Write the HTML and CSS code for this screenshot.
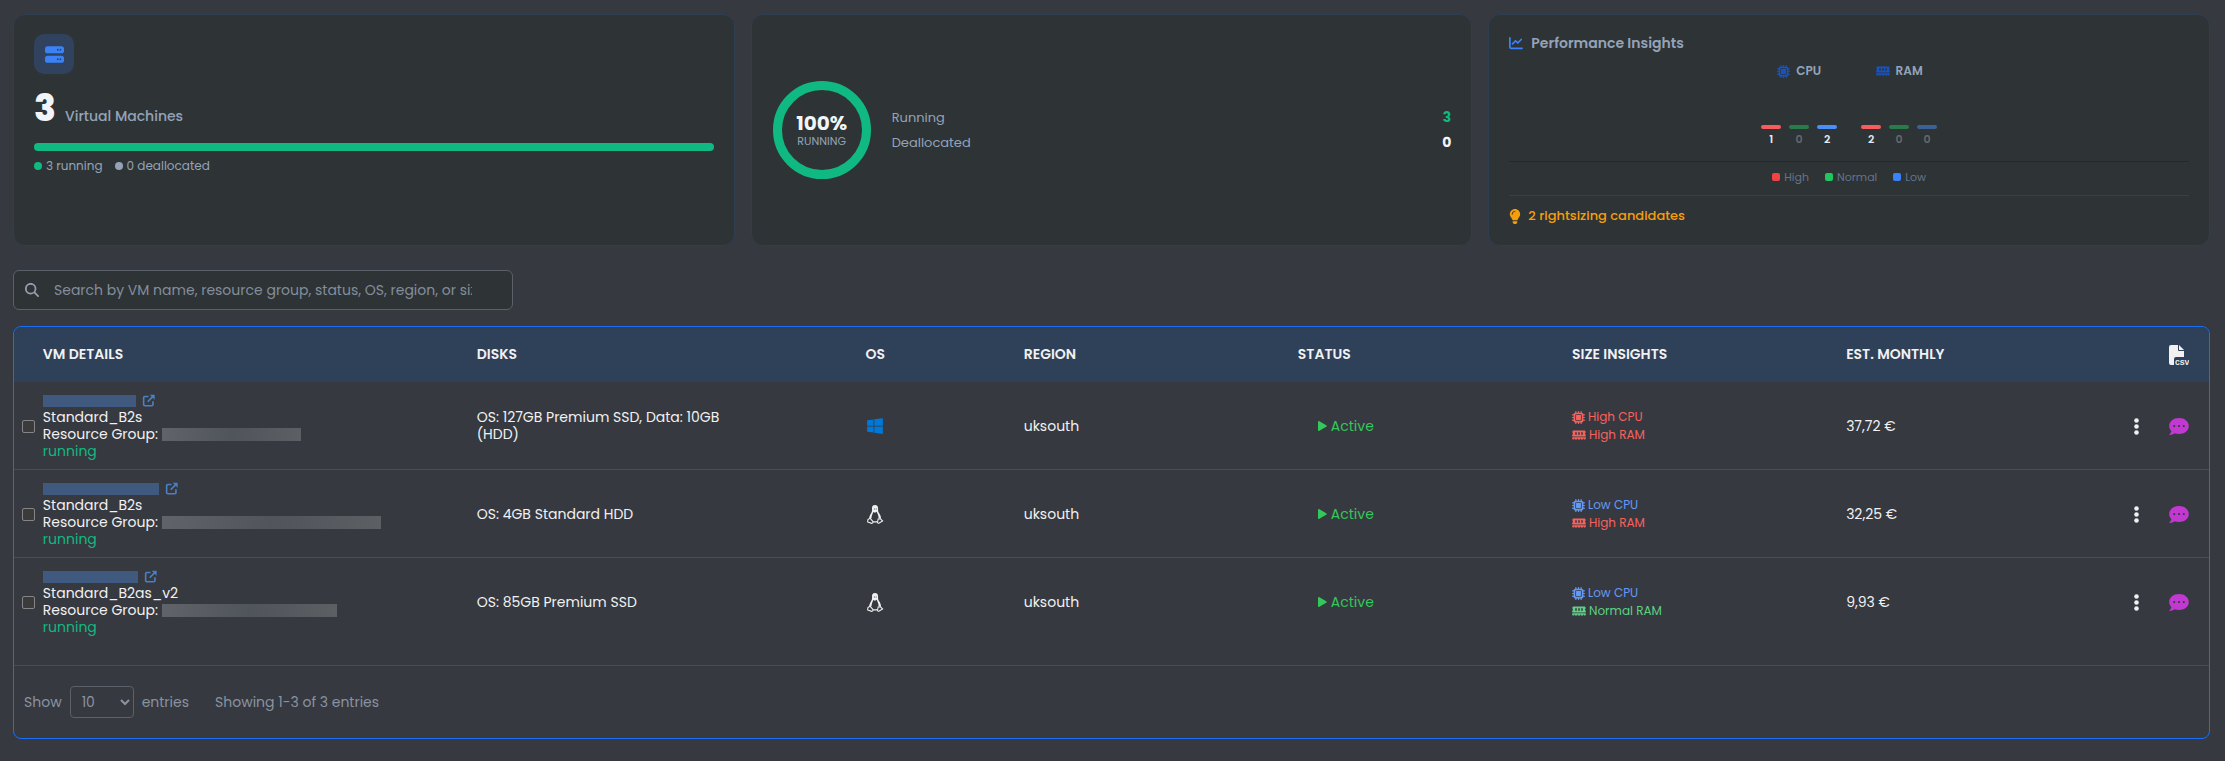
FILE: index.html
```html
<!DOCTYPE html>
<html lang="en">
<head>
    <meta charset="UTF-8">
    <meta name="viewport" content="width=device-width, initial-scale=1.0">
    <title>Virtual Machines</title>
    <link rel="stylesheet" href="styles.css">
</head>
<body>
    <!-- Icon sprite -->
    <svg class="sprite" aria-hidden="true">
        <symbol id="i-server" viewBox="0 0 512 512"><path fill-rule="evenodd" d="M64 32C28.7 32 0 60.7 0 96l0 64c0 35.3 28.7 64 64 64l384 0c35.3 0 64-28.7 64-64l0-64c0-35.3-28.7-64-64-64L64 32zm280 72a24 24 0 1 1 0 48 24 24 0 1 1 0-48zm48 24a24 24 0 1 1 48 0 24 24 0 1 1 -48 0zM64 288c-35.3 0-64 28.7-64 64l0 64c0 35.3 28.7 64 64 64l384 0c35.3 0 64-28.7 64-64l0-64c0-35.3-28.7-64-64-64L64 288zm280 72a24 24 0 1 1 0 48 24 24 0 1 1 0-48zm48 24a24 24 0 1 1 48 0 24 24 0 1 1 -48 0z"/></symbol>
        <symbol id="i-chip" viewBox="0 0 512 512"><path fill-rule="evenodd" d="M176 24c0-13.3-10.7-24-24-24s-24 10.7-24 24l0 40c-35.3 0-64 28.7-64 64l-40 0c-13.3 0-24 10.7-24 24s10.7 24 24 24l40 0 0 56-40 0c-13.3 0-24 10.7-24 24s10.7 24 24 24l40 0 0 56-40 0c-13.3 0-24 10.7-24 24s10.7 24 24 24l40 0c0 35.3 28.7 64 64 64l0 40c0 13.3 10.7 24 24 24s24-10.7 24-24l0-40 56 0 0 40c0 13.3 10.7 24 24 24s24-10.7 24-24l0-40 56 0 0 40c0 13.3 10.7 24 24 24s24-10.7 24-24l0-40c35.3 0 64-28.7 64-64l40 0c13.3 0 24-10.7 24-24s-10.7-24-24-24l-40 0 0-56 40 0c13.3 0 24-10.7 24-24s-10.7-24-24-24l-40 0 0-56 40 0c13.3 0 24-10.7 24-24s-10.7-24-24-24l-40 0c0-35.3-28.7-64-64-64l0-40c0-13.3-10.7-24-24-24s-24 10.7-24 24l0 40-56 0 0-40c0-13.3-10.7-24-24-24s-24 10.7-24 24l0 40-56 0 0-40zM160 128l192 0c17.7 0 32 14.3 32 32l0 192c0 17.7-14.3 32-32 32l-192 0c-17.7 0-32-14.3-32-32l0-192c0-17.7 14.3-32 32-32zm192 32l-192 0 0 192 192 0 0-192z"/></symbol>
        <symbol id="i-ram" viewBox="0 0 576 512"><path fill-rule="evenodd" d="M64 64C28.7 64 0 92.7 0 128l0 7.4c0 6.8 4.4 12.6 10.1 16.3C23.3 160.3 32 175.1 32 192s-8.7 31.7-21.9 40.3C4.4 236 0 241.8 0 248.6L0 320l576 0 0-71.4c0-6.8-4.4-12.6-10.1-16.3C552.7 223.7 544 208.9 544 192s8.7-31.7 21.9-40.3c5.7-3.7 10.1-9.5 10.1-16.3l0-7.4c0-35.3-28.7-64-64-64L64 64zM576 352L0 352l0 64c0 17.7 14.3 32 32 32l48 0 0-32c0-8.8 7.2-16 16-16s16 7.2 16 16l0 32 96 0 0-32c0-8.8 7.2-16 16-16s16 7.2 16 16l0 32 96 0 0-32c0-8.8 7.2-16 16-16s16 7.2 16 16l0 32 96 0 0-32c0-8.8 7.2-16 16-16s16 7.2 16 16l0 32 48 0c17.7 0 32-14.3 32-32l0-64zM192 160l0 64c0 17.7-14.3 32-32 32s-32-14.3-32-32l0-64c0-17.7 14.3-32 32-32s32 14.3 32 32zm128 0l0 64c0 17.7-14.3 32-32 32s-32-14.3-32-32l0-64c0-17.7 14.3-32 32-32s32 14.3 32 32zm128 0l0 64c0 17.7-14.3 32-32 32s-32-14.3-32-32l0-64c0-17.7 14.3-32 32-32s32 14.3 32 32z"/></symbol>
        <symbol id="i-chart" viewBox="0 0 512 512"><path d="M64 64c0-17.7-14.3-32-32-32S0 46.3 0 64L0 400c0 44.2 35.8 80 80 80l400 0c17.7 0 32-14.3 32-32s-14.3-32-32-32L80 416c-8.8 0-16-7.2-16-16L64 64zm406.6 86.6c12.5-12.5 12.5-32.8 0-45.3s-32.8-12.5-45.3 0L320 210.7l-57.4-57.4c-12.5-12.5-32.8-12.5-45.3 0l-112 112c-12.5 12.5-12.5 32.8 0 45.3s32.8 12.5 45.3 0L240 221.3l57.4 57.4c12.5 12.5 32.8 12.5 45.3 0l128-128z"/></symbol>
        <symbol id="i-bulb" viewBox="0 0 384 512"><path fill-rule="evenodd" d="M272 384c9.6-31.9 29.5-59.1 49.2-86.2c5.2-7.1 10.4-14.2 15.4-21.4c19.8-28.5 31.4-63 31.4-100.3C368 78.8 289.2 0 192 0S16 78.8 16 176c0 37.3 11.6 71.9 31.4 100.3c5 7.2 10.2 14.3 15.4 21.4c19.8 27.1 39.7 54.4 49.2 86.2l160 0zM192 512c44.2 0 80-35.8 80-80l0-16-160 0 0 16c0 44.2 35.8 80 80 80zM112 176c0 8.8-7.2 16-16 16s-16-7.2-16-16c0-61.9 50.1-112 112-112c8.8 0 16 7.2 16 16s-7.2 16-16 16c-44.2 0-80 35.8-80 80z"/></symbol>
        <symbol id="i-search" viewBox="0 0 512 512"><path fill-rule="evenodd" d="M416 208c0 45.9-14.9 88.3-40 122.7L502.6 457.4c12.5 12.5 12.5 32.8 0 45.3s-32.8 12.5-45.3 0L330.7 376c-34.4 25.2-76.8 40-122.7 40C93.1 416 0 322.9 0 208S93.1 0 208 0S416 93.1 416 208zM208 352a144 144 0 1 0 0-288 144 144 0 1 0 0 288z"/></symbol>
        <symbol id="i-open" viewBox="0 0 16 16"><path fill="none" stroke="currentColor" stroke-width="2" d="M8 3H3.500Q2 3 2 4.500V13Q2 14.500 3.500 14.500H12Q13.500 14.500 13.500 13V9M7 9.500L13.500 3"/><path d="M9.500 1H15.500V7z"/></symbol>
        <symbol id="i-play" viewBox="0 0 9 10"><path d="M0 0.500Q0 0 1 0L8.600 4.500Q9 5 8.600 5.500L1 10Q0 10 0 9.500z"/></symbol>
        <symbol id="i-windows" viewBox="0 0 448 512"><path d="M0 93.700l183.600-25.300v177.400H0V93.700zm0 324.600l183.600 25.300V268.400H0v149.900zm203.800 28L448 480V268.400H203.800v177.900zm0-380.600v180.100H448V32L203.800 65.700z"/></symbol>
        <symbol id="i-linux" viewBox="0 0 16 18">
            <path d="M8 0C5.900 0 5 1.400 5.200 3.500C5.400 6 4.800 6.900 3.900 8.500C3 10 2.500 11.300 2.600 12.700L4.700 12.600C4.600 10.500 5.700 8.500 6.400 6.600L8 7.300L9.700 6.500C10.200 8.500 11.500 10 11.400 12.600L13.700 13C13.800 11 12.900 8.900 11.800 7.500C10.700 6 11 4.500 10.900 3C10.800 1 9.700 0 8 0z"/>
            <path d="M7 3.200h.8v1H7zM8.700 3.200h.8v1h-.8z" fill="#363940"/>
            <path fill="none" stroke="currentColor" stroke-width="1" d="M3.200 12.500L5.900 15.500Q6.500 17.400 4.900 17.400L1 16L1.300 13.800zM13.300 13L11 13.300L10.400 16.400Q10.800 17.700 12 17L15.200 15L14 14zM6.400 16H10.300"/>
        </symbol>
        <symbol id="i-dots" viewBox="0 0 5 17"><circle cx="2.500" cy="2.500" r="2.300"/><circle cx="2.500" cy="8.500" r="2.300"/><circle cx="2.500" cy="14.500" r="2.300"/></symbol>
        <symbol id="i-chat" viewBox="0 0 20 17"><path fill-rule="evenodd" d="M10 0C4.500 0 0.200 3.500 0.200 8C0.200 10 1 11.800 2.400 13.100C2.200 14.500 1.200 15.700 0.400 16.400Q0.200 17 0.800 17C3 17 4.800 16 5.900 15.300C7.200 15.800 8.600 16 10 16C15.500 16 19.800 12.500 19.800 8S15.500 0 10 0zM5.200 6.900a1.100 1.100 0 1 0 .01 0zM10 6.900a1.100 1.100 0 1 0 .01 0zM14.800 6.900a1.100 1.100 0 1 0 .01 0z"/></symbol>
        <symbol id="i-csv" viewBox="0 0 20 20"><path d="M0 2Q0 0 2 0H9V5Q9 6 10 6H15V12H7Q5 12 5 14V20H2Q0 20 0 18z"/><path d="M10 0L15 5H10z"/><text x="6" y="20" class="csv-label">CSV</text></symbol>
    </svg>

    <!-- Summary cards -->
    <section class="cards">
        <article class="card">
            <div class="card-icon"><svg class="icon icon-lg"><use href="#i-server"/></svg></div>
            <div class="total"><strong>3</strong><span>Virtual Machines</span></div>
            <div class="progress"></div>
            <div class="progress-legend">
                <span><i class="dot dot-green"></i>3 running</span>
                <span><i class="dot dot-gray"></i>0 deallocated</span>
            </div>
        </article>

        <article class="card card-ring">
            <div class="ring"><strong>100%</strong><span>RUNNING</span></div>
            <dl class="states">
                <div><dt>Running</dt><dd class="green">3</dd></div>
                <div><dt>Deallocated</dt><dd>0</dd></div>
            </dl>
        </article>

        <article class="card card-insights">
            <h2 class="card-title"><svg class="icon"><use href="#i-chart"/></svg>Performance Insights</h2>
            <div class="charts">
                <div class="chart">
                    <h3><svg class="icon icon-sm"><use href="#i-chip"/></svg>CPU</h3>
                    <div class="bars">
                        <div class="bar high">1</div>
                        <div class="bar normal empty">0</div>
                        <div class="bar low">2</div>
                    </div>
                </div>
                <div class="chart">
                    <h3><svg class="icon icon-ram"><use href="#i-ram"/></svg>RAM</h3>
                    <div class="bars">
                        <div class="bar high">2</div>
                        <div class="bar normal empty">0</div>
                        <div class="bar low empty">0</div>
                    </div>
                </div>
            </div>
            <div class="chart-legend">
                <span><i class="swatch high"></i>High</span>
                <span><i class="swatch normal"></i>Normal</span>
                <span><i class="swatch low"></i>Low</span>
            </div>
            <div class="candidates"><svg class="icon icon-bulb"><use href="#i-bulb"/></svg>2 rightsizing candidates</div>
        </article>
    </section>

    <!-- Search -->
    <label class="search">
        <svg class="icon"><use href="#i-search"/></svg>
        <input type="text" aria-label="Search" placeholder="Search by VM name, resource group, status, OS, region, or size">
    </label>

    <!-- VM table -->
    <div class="table-box">
        <table>
            <colgroup>
                <col class="col-check">
                <col class="col-vm">
                <col class="col-disks">
                <col class="col-os">
                <col class="col-std">
                <col class="col-std">
                <col class="col-std">
                <col class="col-std">
                <col class="col-action">
                <col class="col-action">
            </colgroup>
            <thead>
                <tr>
                    <th></th>
                    <th>VM DETAILS</th>
                    <th>DISKS</th>
                    <th>OS</th>
                    <th>REGION</th>
                    <th>STATUS</th>
                    <th>SIZE INSIGHTS</th>
                    <th>EST. MONTHLY</th>
                    <th></th>
                    <th><button type="button" class="icon-btn" aria-label="Export"><svg class="icon icon-csv"><use href="#i-csv"/></svg></button></th>
                </tr>
            </thead>
            <tbody>
                <tr>
                    <td class="check"><input type="checkbox" aria-label="Select VM"></td>
                    <td>
                        <div class="line"><a href="#" class="vm-link" aria-label="Open VM"><span class="mask name-1"></span><svg class="icon icon-open"><use href="#i-open"/></svg></a></div>
                        <div class="line">Standard_B2s</div>
                        <div class="line">Resource Group: <span class="mask-gray group-1"></span></div>
                        <div class="line green">running</div>
                    </td>
                    <td class="disks">OS: 127GB Premium SSD, Data: 10GB (HDD)</td>
                    <td><svg class="icon icon-windows"><use href="#i-windows"/></svg></td>
                    <td>uksouth</td>
                    <td><span class="status"><svg class="icon"><use href="#i-play"/></svg>Active</span></td>
                    <td>
                        <div class="insight text-high"><svg class="icon icon-sm"><use href="#i-chip"/></svg>High CPU</div>
                        <div class="insight text-high"><svg class="icon icon-ram"><use href="#i-ram"/></svg>High RAM</div>
                    </td>
                    <td>37,72 €</td>
                    <td><button type="button" class="icon-btn" aria-label="More"><svg class="icon icon-dots"><use href="#i-dots"/></svg></button></td>
                    <td><button type="button" class="icon-btn chat" aria-label="Comments"><svg class="icon icon-chat"><use href="#i-chat"/></svg></button></td>
                </tr>
                <tr>
                    <td class="check"><input type="checkbox" aria-label="Select VM"></td>
                    <td>
                        <div class="line"><a href="#" class="vm-link" aria-label="Open VM"><span class="mask name-2"></span><svg class="icon icon-open"><use href="#i-open"/></svg></a></div>
                        <div class="line">Standard_B2s</div>
                        <div class="line">Resource Group: <span class="mask-gray group-2"></span></div>
                        <div class="line green">running</div>
                    </td>
                    <td class="disks">OS: 4GB Standard HDD</td>
                    <td><svg class="icon icon-linux"><use href="#i-linux"/></svg></td>
                    <td>uksouth</td>
                    <td><span class="status"><svg class="icon"><use href="#i-play"/></svg>Active</span></td>
                    <td>
                        <div class="insight text-low"><svg class="icon icon-sm"><use href="#i-chip"/></svg>Low CPU</div>
                        <div class="insight text-high"><svg class="icon icon-ram"><use href="#i-ram"/></svg>High RAM</div>
                    </td>
                    <td>32,25 €</td>
                    <td><button type="button" class="icon-btn" aria-label="More"><svg class="icon icon-dots"><use href="#i-dots"/></svg></button></td>
                    <td><button type="button" class="icon-btn chat" aria-label="Comments"><svg class="icon icon-chat"><use href="#i-chat"/></svg></button></td>
                </tr>
                <tr>
                    <td class="check"><input type="checkbox" aria-label="Select VM"></td>
                    <td>
                        <div class="line"><a href="#" class="vm-link" aria-label="Open VM"><span class="mask name-3"></span><svg class="icon icon-open"><use href="#i-open"/></svg></a></div>
                        <div class="line">Standard_B2as_v2</div>
                        <div class="line">Resource Group: <span class="mask-gray group-3"></span></div>
                        <div class="line green">running</div>
                    </td>
                    <td class="disks">OS: 85GB Premium SSD</td>
                    <td><svg class="icon icon-linux"><use href="#i-linux"/></svg></td>
                    <td>uksouth</td>
                    <td><span class="status"><svg class="icon"><use href="#i-play"/></svg>Active</span></td>
                    <td>
                        <div class="insight text-low"><svg class="icon icon-sm"><use href="#i-chip"/></svg>Low CPU</div>
                        <div class="insight text-normal"><svg class="icon icon-ram"><use href="#i-ram"/></svg>Normal RAM</div>
                    </td>
                    <td>9,93 €</td>
                    <td><button type="button" class="icon-btn" aria-label="More"><svg class="icon icon-dots"><use href="#i-dots"/></svg></button></td>
                    <td><button type="button" class="icon-btn chat" aria-label="Comments"><svg class="icon icon-chat"><use href="#i-chat"/></svg></button></td>
                </tr>
            </tbody>
        </table>
        <footer class="table-footer">
            <label for="entries">Show</label>
            <select id="entries">
                <option>10</option>
                <option>25</option>
                <option>50</option>
            </select>
            <span>entries</span>
            <span class="showing">Showing 1-3 of 3 entries</span>
        </footer>
    </div>
</body>
</html>
```

FILE: styles.css
```css
* {
    box-sizing: border-box;
}

body {
    margin: 0;
    padding: 14px 15px 20px 13px;
    background-color: #363940;
    color: #f1f1f1;
    font-family: Poppins, Inter, sans-serif;
    font-size: 14px;
}

h2, h3, dl, dd {
    margin: 0;
}

.sprite {
    display: none;
}

.icon {
    width: 14px;
    height: 14px;
    fill: currentColor;
    flex: none;
}

.icon-lg {
    width: 19px;
    height: 19px;
}

.icon-sm {
    width: 13px;
    height: 13px;
}

.icon-ram {
    width: 14px;
    height: 12px;
}

.green {
    color: #10b981;
}

/* Cards */
.cards {
    display: grid;
    grid-template-columns: repeat(3, 1fr);
    gap: 16px;
    margin-bottom: 24px;
}

.card {
    min-height: 232px;
    padding: 19px 20px 16px;
    background-color: #2e3336;
    border: 1px solid #2f3e50;
    border-radius: 12px;
    color: #94a3b8;
}

.card-insights {
    padding-top: 16px;
}

.card-icon {
    display: flex;
    align-items: center;
    justify-content: center;
    width: 40px;
    height: 40px;
    border-radius: 10px;
    background-color: #31425e;
    color: #3b82f6;
}

.total {
    display: flex;
    align-items: baseline;
    gap: 9px;
    margin-top: 13px;
    line-height: 44px;
    font-weight: 500;
}

.total strong {
    color: #f1f5f9;
    font-size: 36px;
    font-weight: 800;
}

.progress {
    height: 8px;
    margin-top: 5px;
    border-radius: 4px;
    background-color: #10b981;
}

.progress-legend {
    display: flex;
    gap: 12px;
    margin-top: 6px;
    font-size: 12px;
    line-height: 18px;
}

.progress-legend span {
    display: flex;
    align-items: center;
    gap: 4px;
}

.dot {
    width: 8px;
    height: 8px;
    border-radius: 50%;
}

.dot-green {
    background-color: #10b981;
}

.dot-gray {
    background-color: #94a3b8;
}

.card-ring {
    display: flex;
    align-items: center;
    gap: 21px;
    padding: 16px 20px 16px 21px;
}

.ring {
    display: flex;
    flex-direction: column;
    align-items: center;
    justify-content: center;
    width: 98px;
    height: 98px;
    border: 9px solid #10b981;
    border-radius: 50%;
    font-size: 11px;
    line-height: 14px;
}

.ring strong {
    color: #f1f5f9;
    font-size: 20px;
    line-height: 22px;
}

.states {
    flex: 1;
}

.states div {
    display: flex;
    justify-content: space-between;
    font-size: 13px;
    line-height: 25px;
}

.states dd {
    font-size: 14px;
    font-weight: 700;
}

.states dd:not(.green) {
    color: #f1f5f9;
}

.card-title {
    display: flex;
    align-items: center;
    gap: 8px;
    font-size: 14px;
    font-weight: 600;
    line-height: 24px;
}

.card-title .icon {
    color: #3b82f6;
}

.charts {
    display: flex;
    justify-content: center;
    gap: 24px;
    height: 107px;
    padding-top: 6px;
    border-bottom: 1px solid #1e293b;
}

.chart {
    display: flex;
    flex-direction: column;
    align-items: center;
    justify-content: space-between;
    padding-bottom: 14px;
}

.chart h3 {
    display: flex;
    align-items: center;
    gap: 6px;
    font-size: 12px;
    font-weight: 600;
    line-height: 20px;
}

.chart h3 .icon {
    color: #1554c8;
}

.bars {
    display: flex;
    gap: 8px;
}

.bar {
    width: 20px;
    color: #e2e8f0;
    font-size: 11px;
    font-weight: 600;
    line-height: 16px;
    text-align: center;
}

.bar::before {
    content: "";
    display: block;
    height: 4px;
    margin-bottom: 2px;
    border-radius: 2px;
}

.bar.high::before {
    background-color: #f85c5c;
}

.bar.normal::before {
    background-color: #22c55e;
}

.bar.low::before {
    background-color: #4a8ff8;
}

.bar.empty {
    color: #64686c;
}

.bar.empty::before {
    opacity: 0.5;
}

.chart-legend {
    display: flex;
    justify-content: center;
    gap: 16px;
    padding: 6px 0 9px;
    border-bottom: 1px solid #2f4158;
    color: #64748b;
    font-size: 11px;
    line-height: 18px;
}

.chart-legend span {
    display: flex;
    align-items: center;
    gap: 4px;
}

.swatch {
    width: 8px;
    height: 8px;
    border-radius: 2px;
}

.swatch.high {
    background-color: #ef4444;
}

.swatch.normal {
    background-color: #22c55e;
}

.swatch.low {
    background-color: #3b82f6;
}

.candidates {
    display: flex;
    align-items: center;
    gap: 7px;
    padding-top: 10px;
    color: #f59e0b;
    font-size: 13px;
    font-weight: 500;
    line-height: 20px;
}

.icon-bulb {
    width: 12px;
    height: 15px;
}

/* Search */
.search {
    display: flex;
    align-items: center;
    gap: 15px;
    width: 500px;
    max-width: 100%;
    height: 40px;
    margin-bottom: 16px;
    padding: 0 40px 0 11px;
    background-color: #2e3336;
    border: 1px solid #5b616b;
    border-radius: 6px;
    color: #94a0ad;
}

.search input {
    flex: 1;
    min-width: 0;
    padding: 0;
    background: none;
    border: none;
    outline: none;
    color: inherit;
    font: inherit;
}

.search input::placeholder {
    color: #848e9c;
}

/* Table */
.table-box {
    overflow: hidden;
    border: 1px solid #1b6ef3;
    border-radius: 8px;
}

table {
    width: 100%;
    margin-bottom: 20px;
    border-collapse: collapse;
    table-layout: fixed;
}

.col-check {
    width: 0.95%;
}

.col-vm {
    width: 19.75%;
}

.col-disks {
    width: 17.7%;
}

.col-os {
    width: 7.2%;
}

.col-std {
    width: 12.48%;
}

.col-action {
    width: 2.2%;
}

th {
    height: 55px;
    padding: 0 8px;
    background-color: #2f4059;
    font-size: 14px;
    font-weight: 600;
    text-align: left;
}

td {
    height: 87px;
    padding: 10px 8px 9px;
    line-height: 17px;
}

tbody tr + tr {
    border-top: 1px solid #484c53;
}

.check {
    padding-right: 0;
}

.check input {
    appearance: none;
    display: block;
    width: 13px;
    height: 13px;
    margin: 0;
    background-color: #3b3b3b;
    border: 1px solid #858585;
    border-radius: 2px;
}

.line {
    display: flex;
    align-items: center;
    gap: 4px;
    height: 17px;
    white-space: nowrap;
}

.vm-link {
    display: flex;
    align-items: center;
    gap: 6px;
    color: #4a80c4;
}

.icon-open {
    width: 13px;
    height: 13px;
}

.mask {
    height: 12px;
    background-color: #40597f;
}

.mask-gray {
    height: 13px;
    background: linear-gradient(90deg, #60636a, #50545b, #5c5f63);
}

.name-1 {
    width: 93px;
}

.name-2 {
    width: 116px;
}

.name-3 {
    width: 95px;
}

.group-1 {
    width: 139px;
}

.group-2 {
    width: 219px;
}

.group-3 {
    width: 175px;
}

.disks {
    padding-right: 120px;
}

.icon-windows {
    display: block;
    width: 18px;
    height: 18px;
    color: #0078d7;
}

.icon-linux {
    display: block;
    width: 18px;
    height: 19px;
}

.status {
    display: flex;
    align-items: center;
    gap: 4px;
    padding-left: 20px;
    color: #34c759;
}

.status .icon {
    width: 9px;
    height: 10px;
}

.insight {
    display: flex;
    align-items: center;
    gap: 3px;
    font-size: 12px;
    line-height: 18px;
}

.text-high {
    color: #f8625d;
}

.text-low {
    color: #639af5;
}

.text-normal {
    color: #5fd083;
}

.icon-btn {
    display: flex;
    padding: 0;
    background: none;
    border: none;
    color: #f1f1f1;
    cursor: pointer;
}

td .icon-btn {
    margin-left: 14px;
}

td .icon-btn.chat {
    margin-left: 0;
    color: #c239d1;
}

.icon-dots {
    width: 5px;
    height: 17px;
}

.icon-chat {
    width: 20px;
    height: 17px;
}

.icon-csv {
    width: 20px;
    height: 20px;
    overflow: visible;
}

.csv-label {
    font-family: "Liberation Mono", monospace;
    font-size: 8px;
    font-weight: 700;
}

/* Footer */
.table-footer {
    display: flex;
    align-items: center;
    gap: 8px;
    height: 73px;
    padding: 0 10px;
    border-top: 1px solid #484c53;
    color: #8a93a0;
}

.table-footer select {
    width: 64px;
    height: 32px;
    padding: 0 7px;
    background-color: #363940;
    border: 1px solid #5b616b;
    border-radius: 4px;
    color: inherit;
    font: inherit;
}

.showing {
    margin-left: 18px;
}
```
